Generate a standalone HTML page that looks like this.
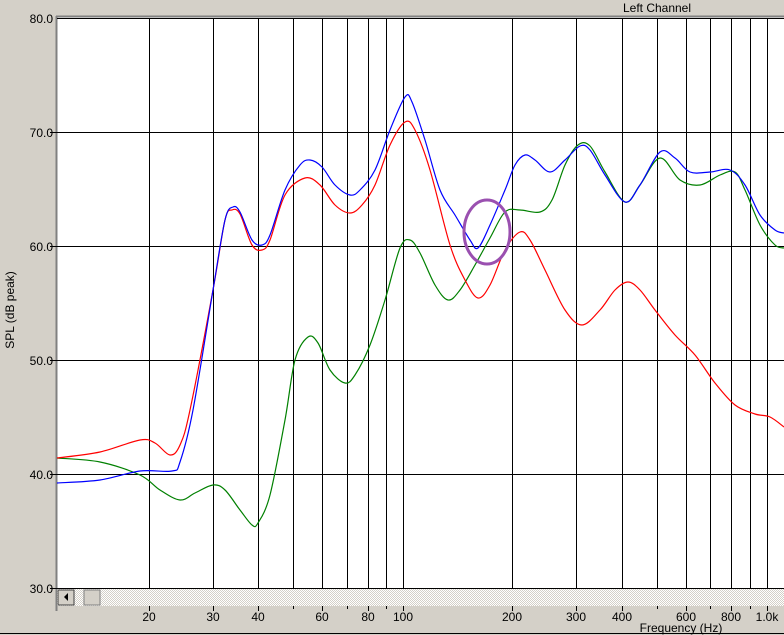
<!DOCTYPE html>
<html><head><meta charset="utf-8"><style>
body{margin:0;width:784px;height:635px;background:#d4d0c8;overflow:hidden;font-family:"Liberation Sans",sans-serif;}
</style></head><body>
<svg width="784" height="635" viewBox="0 0 784 635" xmlns="http://www.w3.org/2000/svg" style="position:absolute;left:0;top:0">
<defs>
<pattern id="dith" width="2" height="2" patternUnits="userSpaceOnUse">
<rect width="2" height="2" fill="#ffffff"/><rect width="1" height="1" fill="#d4d0c8"/><rect x="1" y="1" width="1" height="1" fill="#d4d0c8"/>
</pattern>
</defs>
<rect x="0" y="0" width="784" height="635" fill="#d4d0c8"/>
<text x="657" y="12" font-size="12" text-anchor="middle" fill="#000">Left Channel</text>
<rect x="57" y="17" width="727" height="572" fill="#fff"/>
<line x1="56" y1="16.5" x2="784" y2="16.5" stroke="#808080" stroke-width="2"/>
<line x1="56.5" y1="16" x2="56.5" y2="611" stroke="#808080" stroke-width="2"/>
<g stroke="#000" stroke-width="1">
<line x1="57" y1="18.5" x2="784" y2="18.5"/>
<line x1="50" y1="132.5" x2="784" y2="132.5"/>
<line x1="50" y1="246.5" x2="784" y2="246.5"/>
<line x1="50" y1="360.5" x2="784" y2="360.5"/>
<line x1="50" y1="474.5" x2="784" y2="474.5"/>
<line x1="50" y1="588.5" x2="784" y2="588.5"/>
<g>
<line x1="149.5" y1="18" x2="149.5" y2="589"/><line x1="213.5" y1="18" x2="213.5" y2="589"/><line x1="258.5" y1="18" x2="258.5" y2="589"/><line x1="293.5" y1="18" x2="293.5" y2="589"/><line x1="322.5" y1="18" x2="322.5" y2="589"/><line x1="347.5" y1="18" x2="347.5" y2="589"/><line x1="368.5" y1="18" x2="368.5" y2="589"/><line x1="386.5" y1="18" x2="386.5" y2="589"/><line x1="403.5" y1="18" x2="403.5" y2="589"/><line x1="512.5" y1="18" x2="512.5" y2="589"/><line x1="576.5" y1="18" x2="576.5" y2="589"/><line x1="622.5" y1="18" x2="622.5" y2="589"/><line x1="657.5" y1="18" x2="657.5" y2="589"/><line x1="686.5" y1="18" x2="686.5" y2="589"/><line x1="710.5" y1="18" x2="710.5" y2="589"/><line x1="731.5" y1="18" x2="731.5" y2="589"/><line x1="750.5" y1="18" x2="750.5" y2="589"/><line x1="767.5" y1="18" x2="767.5" y2="589"/>
</g>
<g>
<line x1="149.5" y1="606" x2="149.5" y2="611"/><line x1="213.5" y1="606" x2="213.5" y2="611"/><line x1="258.5" y1="606" x2="258.5" y2="611"/><line x1="293.5" y1="606" x2="293.5" y2="609"/><line x1="322.5" y1="606" x2="322.5" y2="611"/><line x1="347.5" y1="606" x2="347.5" y2="609"/><line x1="368.5" y1="606" x2="368.5" y2="611"/><line x1="386.5" y1="606" x2="386.5" y2="609"/><line x1="403.5" y1="606" x2="403.5" y2="611"/><line x1="512.5" y1="606" x2="512.5" y2="611"/><line x1="576.5" y1="606" x2="576.5" y2="611"/><line x1="622.5" y1="606" x2="622.5" y2="611"/><line x1="657.5" y1="606" x2="657.5" y2="609"/><line x1="686.5" y1="606" x2="686.5" y2="611"/><line x1="710.5" y1="606" x2="710.5" y2="609"/><line x1="731.5" y1="606" x2="731.5" y2="611"/><line x1="750.5" y1="606" x2="750.5" y2="609"/><line x1="767.5" y1="606" x2="767.5" y2="611"/>
</g>
</g>
<rect x="57" y="589" width="727" height="17" fill="url(#dith)"/>
<rect x="58" y="590" width="16" height="15" fill="#d4d0c8" stroke="#404040" stroke-width="1"/>
<polygon points="64,597 68,593 68,601" fill="#000"/>
<rect x="84" y="590" width="16" height="15" fill="#d4d0c8" stroke="#808080" stroke-width="1"/>
<line x1="0" y1="633.5" x2="784" y2="633.5" stroke="#000" stroke-width="1"/>
<g font-size="12" fill="#000" text-anchor="end">
<text x="53" y="23">80.0</text><text x="53" y="137">70.0</text><text x="53" y="251">60.0</text><text x="53" y="365">50.0</text><text x="53" y="479">40.0</text><text x="53" y="593">30.0</text>
</g>
<g font-size="12" fill="#000" text-anchor="middle">
<text x="149" y="621">20</text><text x="213" y="621">30</text><text x="258" y="621">40</text><text x="322" y="621">60</text><text x="368" y="621">80</text><text x="403" y="621">100</text><text x="512" y="621">200</text><text x="576" y="621">300</text><text x="622" y="621">400</text><text x="686" y="621">600</text><text x="731" y="621">800</text><text x="767" y="621">1.0k</text>
<text x="681" y="632">Frequency (Hz)</text>
</g>
<text transform="translate(14,310) rotate(-90)" font-size="12" text-anchor="middle" fill="#000">SPL (dB peak)</text>
<g fill="none" stroke-width="1.2" stroke-linejoin="round" id="curves">
<polyline stroke="#008000" points="57,458 100,462 140,475 160,490 180,500 195,493 213,485 225,490 240,510 252,525 258,523 270,495 285,420 295,360 308,337 318,343 330,370 345,383 355,375 370,345 385,300 400,248 410,240 420,253 435,285 448,300 460,290 475,265 490,238 505,212 520,210 540,212 552,200 565,165 578,145 590,146 605,172 625,202 640,185 660,158 680,180 700,185 720,175 735,172 745,190 760,225 775,245 784,248"/>
<polyline stroke="#ff0000" points="57,458 100,452 140,440 155,443 170,455 180,445 190,410 213,290 225,220 232,210 240,214 252,245 262,250 270,240 285,195 305,178 320,185 335,205 350,213 362,205 375,185 390,145 405,122 415,130 430,170 450,245 465,280 478,298 490,285 505,250 520,232 530,240 545,270 565,310 582,325 600,310 615,290 628,282 640,290 655,310 675,335 695,355 715,383 735,405 755,414 770,417 784,427"/>
<polyline stroke="#0000ff" points="57,483 100,480 140,471 172,471 180,462 193,410 213,290 225,220 233,207 240,212 252,240 262,245 270,235 285,190 300,165 310,160 322,167 335,185 350,195 360,190 375,170 390,130 405,97 412,102 425,140 440,190 455,215 470,240 478,248 490,225 505,190 515,165 525,155 535,160 550,172 565,160 580,146 590,150 605,175 625,202 640,185 660,152 675,158 690,172 710,172 730,170 745,185 760,215 775,230 784,233"/>
</g>
<ellipse cx="487" cy="232" rx="23" ry="32" fill="none" stroke="#9a50b0" stroke-width="3"/>
</svg>
<script>
(function(){
var ns="http://www.w3.org/2000/svg";
document.querySelectorAll('#curves polyline').forEach(function(pl){
var p=pl.getAttribute('points').trim().split(/\s+/).map(function(s){var a=s.split(',');return [+a[0],+a[1]];});
var d='M'+p[0][0]+','+p[0][1];
for(var i=0;i<p.length-1;i++){
var p0=p[i-1]||p[i],p1=p[i],p2=p[i+1],p3=p[i+2]||p2;
var c1x=p1[0]+(p2[0]-p0[0])/6,c1y=p1[1]+(p2[1]-p0[1])/6;
var c2x=p2[0]-(p3[0]-p1[0])/6,c2y=p2[1]-(p3[1]-p1[1])/6;
d+=' C'+c1x.toFixed(1)+','+c1y.toFixed(1)+' '+c2x.toFixed(1)+','+c2y.toFixed(1)+' '+p2[0]+','+p2[1];
}
var path=document.createElementNS(ns,'path');
path.setAttribute('d',d);path.setAttribute('stroke',pl.getAttribute('stroke'));
pl.parentNode.replaceChild(path,pl);
});
})();
</script>
</body></html>
